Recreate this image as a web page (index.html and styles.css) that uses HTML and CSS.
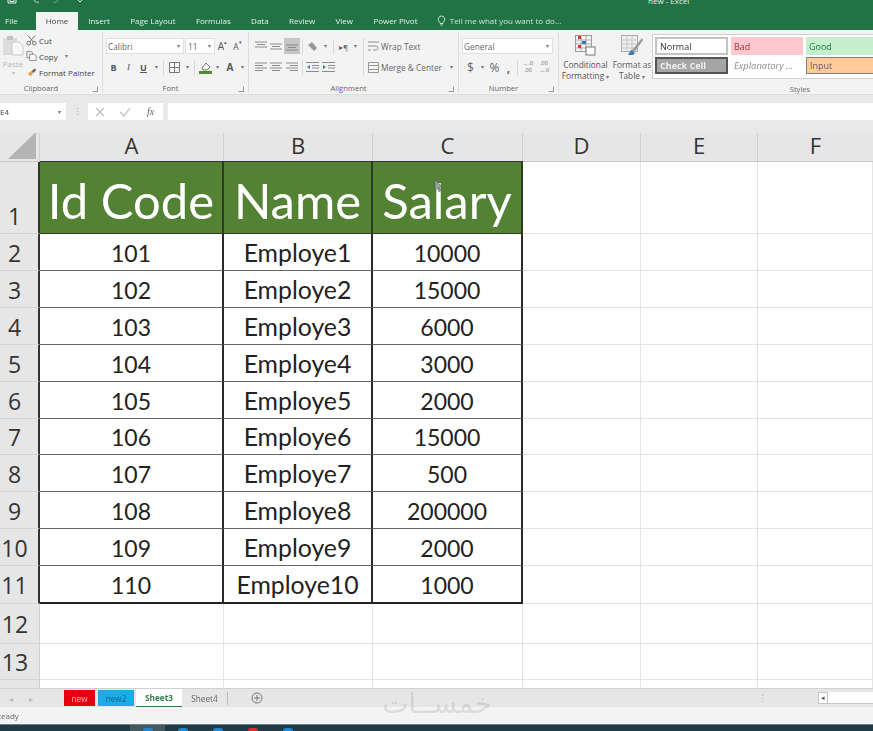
FILE: index.html
```html
<!DOCTYPE html>
<html lang="en">
<head>
<meta charset="utf-8">
<title>new - Excel</title>
<link rel="stylesheet" href="styles.css">
</head>
<body>
<div class="app">
  <header class="titlebar">
    <svg class="qat" width="90" height="5" viewBox="0 0 90 5"><path d="M8 0v3h8V0M10 0v1.5h4V0" fill="none" stroke="#e8f0ea" stroke-width="1"/><path d="M34 0c1 2 3 3 5 2" fill="none" stroke="#cfe0d5"/><path d="M58 0c-1 2-3 3-5 2" fill="none" stroke="#7fa98d"/><path d="M78 0l2 2 2-2" fill="none" stroke="#e8f0ea"/></svg>
    <span class="doc-title">new - Excel</span>
  </header>
  <nav class="tabs">
    <span class="tab tab-file">File</span>
    <span class="tab tab-home">Home</span>
    <span class="tab">Insert</span>
    <span class="tab">Page Layout</span>
    <span class="tab">Formulas</span>
    <span class="tab">Data</span>
    <span class="tab">Review</span>
    <span class="tab">View</span>
    <span class="tab">Power Pivot</span>
    <span class="tell">
      <svg width="9" height="12" viewBox="0 0 9 12"><path d="M4.5 1a3.3 3.3 0 0 0-2 5.9c.5.5.6 1 .6 1.6h2.8c0-.6.1-1.100.6-1.600A3.300 3.300 0 0 0 4.500 1zM3.300 10h2.400" fill="none" stroke="#dcebe1" stroke-width=".9"/></svg>
      Tell me what you want to do...
    </span>
  </nav>

  <section class="ribbon">
    <div class="group g-clip">
      <div class="body clip-body">
        <div class="paste">
          <svg width="23" height="21" viewBox="0 0 23 21"><rect x="1" y="3" width="14" height="17" fill="#dcdcdc"/><rect x="5" y="1" width="6" height="4" fill="#c4c4c4"/><path d="M10 7h7l4 4v9H10z" fill="#f7f7f7" stroke="#c8c8c8"/></svg>
          <span class="paste-label">Paste</span>
          <span class="caret pale">▾</span>
        </div>
        <div class="clip-list">
          <div class="clip-row"><svg width="11" height="12" viewBox="0 0 12 12"><path d="M2 1l6 7M10 1L4 8" stroke="#666" fill="none"/><circle cx="3" cy="9.500" r="2" fill="none" stroke="#666"/><circle cx="9" cy="9.500" r="2" fill="none" stroke="#666"/></svg><span>Cut</span></div>
          <div class="clip-row"><svg width="11" height="12" viewBox="0 0 12 12"><path d="M1 1h5l1 1v6H1z" fill="#eee" stroke="#888"/><path d="M4 4h5l2 2v5H4z" fill="#f8f8f8" stroke="#888"/></svg><span>Copy</span><span class="caret copy-caret">▾</span></div>
          <div class="clip-row"><svg width="11" height="12" viewBox="0 0 12 12"><path d="M6 5l4-3 1 2-3 3z" fill="#666"/><path d="M2 8l4-3 2 2-3 4z" fill="#e9a24a"/></svg><span>Format Painter</span></div>
        </div>
      </div>
      <div class="label"><i></i><span>Clipboard</span><b class="launch"></b></div>
    </div>

    <div class="group g-font">
      <div class="body">
        <div class="row">
          <div class="select font-name"><span>Calibri</span><span class="caret">▾</span></div>
          <div class="select font-size"><span>11</span><span class="caret">▾</span></div>
          <span class="ib big-a">A<sup>▴</sup></span>
          <span class="ib small-a">A<sup>▾</sup></span>
        </div>
        <div class="row row2">
          <span class="ib fmt fmt-b">B</span>
          <span class="ib fmt fmt-i">I</span>
          <span class="ib fmt fmt-u">U</span>
          <span class="caret cw">▾</span>
          <i class="sep"></i>
          <span class="ib wide"><svg width="11" height="11" viewBox="0 0 11 11"><path d="M.5.5h10v10H.5zM5.500.5v10M.5 5.500h10" fill="none" stroke="#777"/></svg></span>
          <span class="caret cw">▾</span>
          <i class="sep"></i>
          <span class="ib wide"><svg width="13" height="13" viewBox="0 0 13 13"><path d="M3 7l4-5 4 4-3 3H4z" fill="#f4f4f4" stroke="#777"/><rect x="0" y="10" width="13" height="3" fill="#4c8c2f"/></svg></span>
          <span class="caret cw cw-tight">▾</span>
          <span class="ib wide color-a">A</span>
          <span class="caret cw cw-tight">▾</span>
        </div>
      </div>
      <div class="label"><i></i><span>Font</span><b class="launch"></b></div>
    </div>

    <div class="group g-align">
      <div class="body align-body">
        <div class="align-left">
          <div class="row row-align">
            <span class="ib al"><svg width="12" height="10" viewBox="0 0 12 10"><path d="M0 1h12M2 3.500h8M0 6h12" stroke="#8a8a8a"/></svg></span>
            <span class="ib al"><svg width="12" height="10" viewBox="0 0 12 10"><path d="M0 3h12M2 5.500h8M0 8h12" stroke="#8a8a8a"/></svg></span>
            <span class="ib al al-on"><svg width="12" height="10" viewBox="0 0 12 10"><path d="M0 4h12M2 6.500h8M0 9h12" stroke="#8a8a8a"/></svg></span>
            <i class="sep"></i>
            <span class="ib wide"><svg width="12" height="11" viewBox="0 0 12 11"><path d="M1 4l4-3 5 6-3 3z" fill="#999"/></svg></span>
            <span class="caret cw cw-tight">▾</span>
            <i class="sep sep-loose"></i>
            <span class="ib rtl-ic">▸¶</span>
            <span class="caret cw cw-tight">▾</span>
          </div>
          <div class="row row2 row-align">
            <span class="ib al"><svg width="12" height="10" viewBox="0 0 12 10"><path d="M0 1h12M0 3.500h8M0 6h12M0 8.500h8" stroke="#8a8a8a"/></svg></span>
            <span class="ib al"><svg width="12" height="10" viewBox="0 0 12 10"><path d="M0 1h12M2 3.500h8M0 6h12M2 8.500h8" stroke="#8a8a8a"/></svg></span>
            <span class="ib al"><svg width="12" height="10" viewBox="0 0 12 10"><path d="M0 1h12M4 3.500h8M0 6h12M4 8.500h8" stroke="#8a8a8a"/></svg></span>
            <i class="sep"></i>
            <span class="ib al wide-al"><svg width="13" height="10" viewBox="0 0 13 10"><path d="M0 .5h13M6 3.500h7M6 6h7M0 9.500h13" stroke="#8a8a8a"/><path d="M4 3v4L1 5z" fill="#3a78b0"/></svg></span>
            <span class="ib al wide-al"><svg width="13" height="10" viewBox="0 0 13 10"><path d="M0 .5h13M6 3.500h7M6 6h7M0 9.500h13" stroke="#8a8a8a"/><path d="M1 3v4l3-2z" fill="#3a9060"/></svg></span>
          </div>
        </div>
        <i class="sep tall"></i>
        <div class="align-right">
          <div class="cmd"><svg width="11" height="11" viewBox="0 0 11 11"><path d="M0 1h11M0 5h7c4 0 4 4 0 4H5M0 9h3" fill="none" stroke="#8a8a8a"/></svg><span>Wrap Text</span></div>
          <div class="cmd cmd2"><svg width="11" height="11" viewBox="0 0 11 11"><path d="M.5.5h10v10H.5zM.5 3.500h10M.5 7.500h10" fill="none" stroke="#999"/></svg><span>Merge &amp; Center</span><span class="caret merge-caret">▾</span></div>
        </div>
      </div>
      <div class="label"><i></i><span>Alignment</span><b class="launch"></b></div>
    </div>

    <div class="group g-num">
      <div class="body">
        <div class="row"><div class="select num-select"><span>General</span><span class="caret">▾</span></div></div>
        <div class="row row2 num-row">
          <span class="ib num-sym dollar">$</span>
          <span class="caret cw">▾</span>
          <span class="ib num-sym pct">%</span>
          <span class="ib num-sym comma">,</span>
          <i class="sep"></i>
          <span class="dec">←.0<br>.00</span>
          <span class="dec">.00<br>→.0</span>
        </div>
      </div>
      <div class="label"><i></i><span>Number</span><b class="launch"></b></div>
    </div>

    <div class="big-btn cond">
      <svg width="21" height="21" viewBox="0 0 21 21"><rect x=".5" y=".5" width="16" height="16" fill="#f7f7f7" stroke="#999"/><path d="M.5 5h16M.5 9h16M.5 13h16M6 .5v16M11 .5v16" stroke="#aaa"/><rect x="3" y="1" width="3" height="3" fill="#d33"/><rect x="7" y="6" width="4" height="3" fill="#3a78b0"/><rect x="3" y="10" width="3" height="3" fill="#d33"/><rect x="11" y="12" width="9" height="8" fill="#fff" stroke="#777"/></svg>
      <span>Conditional</span>
      <span>Formatting <em class="caret">▾</em></span>
    </div>
    <div class="big-btn table-btn">
      <svg width="23" height="21" viewBox="0 0 23 21"><rect x=".5" y=".5" width="16" height="16" fill="#f0f0f0" stroke="#aaa"/><path d="M.5 5h16M.5 9h16M.5 13h16M6 .5v16M11 .5v16" stroke="#c4c4c4"/><path d="M21 3L12 14l-2 2 2 1 3-2 7-10z" fill="#9a9a9a"/><path d="M7 20l3-5 4 3-2 2z" fill="#3a78b0"/></svg>
      <span>Format as</span>
      <span>Table <em class="caret">▾</em></span>
    </div>

    <div class="group g-styles">
      <div class="gallery">
        <span class="st st-normal">Normal</span>
        <span class="st st-bad">Bad</span>
        <span class="st st-good">Good</span>
        <span class="st st-check">Check Cell</span>
        <span class="st st-expl">Explanatory ...</span>
        <span class="st st-input">Input</span>
      </div>
      <div class="label styles-label"><span>Styles</span></div>
    </div>
  </section>

  <section class="formula">
    <div class="namebox"><span>E4</span><span class="caret">▾</span></div>
    <span class="dots">⋮</span>
    <div class="fx-buttons">
      <svg width="10" height="10" viewBox="0 0 10 10"><path d="M1 1l8 8M9 1L1 9" stroke="#bdbdbd" stroke-width="1.200"/></svg>
      <svg width="12" height="10" viewBox="0 0 12 10"><path d="M1 5l4 4 6-8" stroke="#bdbdbd" stroke-width="1.200" fill="none"/></svg>
      <span class="fx">fx</span>
    </div>
    <div class="fx-input"></div>
  </section>

  <main class="sheet">
    <div class="corner"><svg width="28" height="27" viewBox="0 0 28 27"><path d="M28 0v27H0z" fill="#b4b4b4"/></svg></div>
    <div class="colh">A</div><div class="colh">B</div><div class="colh">C</div><div class="colh">D</div><div class="colh">E</div><div class="colh colh-last">F</div>

    <div class="rowh rowh-first r-head">1</div>
    <div class="th">Id Code</div><div class="th">Name</div><div class="th">Salary</div><div class="c"></div><div class="c"></div><div class="c"></div>

    <div class="rowh r-data">2</div><div class="td">101</div><div class="td td-name">Employe1</div><div class="td">10000</div><div class="c"></div><div class="c"></div><div class="c"></div>
    <div class="rowh r-data">3</div><div class="td">102</div><div class="td td-name">Employe2</div><div class="td">15000</div><div class="c"></div><div class="c"></div><div class="c"></div>
    <div class="rowh r-data">4</div><div class="td">103</div><div class="td td-name">Employe3</div><div class="td">6000</div><div class="c"></div><div class="c"></div><div class="c"></div>
    <div class="rowh r-data">5</div><div class="td">104</div><div class="td td-name">Employe4</div><div class="td">3000</div><div class="c"></div><div class="c"></div><div class="c"></div>
    <div class="rowh r-data">6</div><div class="td">105</div><div class="td td-name">Employe5</div><div class="td">2000</div><div class="c"></div><div class="c"></div><div class="c"></div>
    <div class="rowh r-data">7</div><div class="td">106</div><div class="td td-name">Employe6</div><div class="td">15000</div><div class="c"></div><div class="c"></div><div class="c"></div>
    <div class="rowh r-data">8</div><div class="td">107</div><div class="td td-name">Employe7</div><div class="td">500</div><div class="c"></div><div class="c"></div><div class="c"></div>
    <div class="rowh r-data">9</div><div class="td">108</div><div class="td td-name">Employe8</div><div class="td">200000</div><div class="c"></div><div class="c"></div><div class="c"></div>
    <div class="rowh r-data">10</div><div class="td">109</div><div class="td td-name">Employe9</div><div class="td">2000</div><div class="c"></div><div class="c"></div><div class="c"></div>
    <div class="rowh r-data">11</div><div class="td td-last">110</div><div class="td td-name td-last">Employe10</div><div class="td td-last">1000</div><div class="c"></div><div class="c"></div><div class="c"></div>
    <div class="rowh">12</div><div class="c"></div><div class="c"></div><div class="c"></div><div class="c"></div><div class="c"></div><div class="c"></div>
    <div class="rowh">13</div><div class="c"></div><div class="c"></div><div class="c"></div><div class="c"></div><div class="c"></div><div class="c"></div>
    <div class="rowh rowh-end"></div><div class="c"></div><div class="c"></div><div class="c"></div><div class="c"></div><div class="c"></div><div class="c"></div>

    <svg class="cursor" width="10" height="14" viewBox="0 0 10 14"><path d="M1 1v10l2.500-2 1.500 3.500 1.800-.8L5.300 8.300H8.500z" fill="#9aa5a0" stroke="#55625a" stroke-width=".7"/></svg>
  </main>

  <section class="sheetbar">
    <span class="nav">◂</span>
    <span class="nav">▸</span>
    <span class="stab stab-red">new</span>
    <span class="stab stab-blue">new2</span>
    <span class="stab stab-active">Sheet3</span>
    <span class="stab stab-plain">Sheet4</span>
    <i class="stab-sep"></i>
    <svg class="plus" width="12" height="12" viewBox="0 0 12 12"><circle cx="6" cy="6" r="5" fill="none" stroke="#777"/><path d="M3 6h6M6 3v6" stroke="#777"/></svg>
    <span class="dots sheet-dots">⋮</span>
    <div class="scroll"><span class="scroll-btn">◂</span><span class="scroll-track"></span></div>
    <span class="watermark" lang="ar" dir="rtl">خمســات</span>
  </section>
  <footer class="status">Ready</footer>
  <div class="taskbar">
    <span class="task task-on"><b class="blue"></b></span>
    <span class="task"><b class="blue"></b></span>
    <span class="task"><b class="blue"></b></span>
    <span class="task"><b class="red"></b></span>
    <span class="task"><b class="blue"></b></span>
  </div>
</div>
</body>
</html>
```

FILE: styles.css
```css
* { box-sizing: border-box; }
html, body { margin: 0; padding: 0; background: #fff; }
.app {
  width: 873px; height: 731px; overflow: hidden; position: relative;
  display: flex; flex-direction: column;
  font-family: "Open Sans", "Liberation Sans", sans-serif;
  color: #444;
}
i, em { font-style: normal; }

.titlebar { height: 12px; background: #217346; flex: none; display: flex; overflow: hidden; }
.qat { flex: none; display: block; }
.doc-title { margin-left: 558px; margin-top: -5px; font-size: 8px; line-height: 12px; color: #e4efe8; }

.tabs { height: 18px; flex: none; background: #217346; display: flex; align-items: stretch; font-size: 8px; color: #e6f0ea; line-height: 18px; filter: blur(.25px); }
.tab { padding: 0 10.200px; white-space: nowrap; }
.tab-file { width: 36px; padding: 0 0 0 5px; }
.tab-home { width: 42px; padding: 0; text-align: center; background: #f3f3f3; color: #444; }
.tell { margin-left: 9px; display: flex; align-items: center; gap: 4px; white-space: nowrap; color: #cfe2d6; }

.ribbon { height: 65px; flex: none; display: flex; background: #f3f3f3; padding-top: 2px; font-size: 8px; border-bottom: 1px solid #dedede; filter: blur(.3px); }
.group { display: flex; flex-direction: column; border-right: 1px solid #dcdcdc; flex: none; height: 61px; }
.body { height: 51px; padding-top: 6px; flex: none; }
.label { height: 11px; padding-right: 10px; display: grid; grid-template-columns: 1fr auto 1fr; align-items: center; color: #666; line-height: 11px; font-size: 7.600px; }
.launch { justify-self: end; margin-right: -6px; width: 6px; height: 6px; border: 1px solid #999; border-top-color: transparent; border-left-color: transparent; }
.g-clip .label { padding-right: 20px; }
.g-clip .launch { margin-right: -16px; }
.caret { font-size: 6px; color: #777; }
.pale { color: #bbb; }
.row { display: flex; align-items: center; height: 16px; }
.row2 { margin-top: 5px; }
.ib { display: flex; align-items: center; justify-content: center; width: 15px; height: 16px; flex: none; }
.wide { width: 16px; }
.cw { width: 10px; text-align: center; flex: none; }
.cw-tight { width: 9px; }
.sep { width: 1px; height: 15px; background: #d8d8d8; flex: none; margin: 0 2px; }
.sep-loose { margin: 0 3px; }

.g-clip { width: 103px; }
.clip-body { display: flex; padding-top: 0; }
.paste { width: 26px; display: flex; flex-direction: column; align-items: center; padding-top: 3px; flex: none; }
.paste-label { color: #b5b5b5; line-height: 10px; margin-top: 3px; }
.clip-list { display: flex; flex-direction: column; }
.clip-row { height: 16px; display: flex; align-items: center; gap: 1px; white-space: nowrap; }
.clip-row svg { margin-right: 1px; }
.copy-caret { margin-left: 6px; }

.g-font { width: 146px; }
.g-font .body { padding-left: 3px; }
.select { background: #fff; border: 1px solid #e0e0e0; height: 16px; display: flex; align-items: center; justify-content: space-between; padding: 0 3px 0 1px; flex: none; color: #666; font-size: 8.300px; }
.font-name { width: 78px; }
.font-size { width: 30px; margin-left: 1px; padding-left: 2px; }
.big-a { font-size: 10px; color: #555; }
.small-a { font-size: 8.500px; color: #555; }
.ib sup { font-size: 5px; line-height: 1; align-self: flex-start; margin-top: 2px; }
.fmt { font-family: "Liberation Serif", serif; font-size: 9px; color: #555; }
.fmt-b { font-family: "Open Sans", sans-serif; font-weight: 700; }
.fmt-i { font-style: italic; }
.fmt-u { text-decoration: underline; font-family: "Open Sans", sans-serif; font-weight: 700; }
.color-a { font-weight: 700; font-size: 10px; color: #555; }

.g-align { width: 210px; }
.align-body { display: flex; padding-left: 4px; }
.align-left { width: 110px; flex: none; }
.row-align .al { width: 15.500px; }
.al-on { background: #c6c6c6; }
.wide-al { width: 16px !important; }
.rtl-ic { font-size: 8px; color: #666; width: 14px; }
.tall { height: 38px; margin: 0 4px 0 0; }
.cmd { height: 16px; display: flex; align-items: center; gap: 2px; white-space: nowrap; font-size: 8.300px; color: #666; }
.cmd2 { margin-top: 5px; }
.merge-caret { margin-left: 6px; }

.g-num { width: 100px; }
.g-num .body { padding-left: 3px; }
.num-select { width: 91px; }
.num-row { padding-left: 2px; color: #666; }
.num-sym { font-size: 12px; width: 13px; }
.pct { width: 15px; }
.comma { font-weight: 700; }
.dec { width: 16px; font-size: 5.500px; line-height: 7.500px; text-align: center; flex: none; }

.big-btn { width: 47px; flex: none; display: flex; flex-direction: column; align-items: center; height: 48px; line-height: 11px; color: #555; white-space: nowrap; font-size: 8.300px; }
.big-btn svg { margin-top: 3px; margin-bottom: 3px; flex: none; }
.cond { width: 53px; }
.table-btn { width: 40px; }

.g-styles { width: 296px; border-right: 0; }
.gallery { height: 45px; margin-top: 2px; background: #fff; border: 1px solid #cfcfcf; padding: 2px; display: grid; grid-template-columns: 73px 72px 72px; grid-template-rows: 18px 17px; column-gap: 3px; row-gap: 2px; flex: none; }
.st { display: flex; align-items: center; padding-left: 3px; font-size: 9px; white-space: nowrap; overflow: hidden; }
.st-normal { border: 2px solid #c4c4c4; color: #333; }
.st-bad { background: #ffc7ce; color: #a8323c; }
.st-good { background: #c6efce; color: #1f7a3a; }
.st-check { background: #a5a5a5; border: 2px solid #555; color: #f0f0f0; font-weight: 700; }
.st-expl { color: #8a8a8a; font-style: italic; font-size: 9.400px; }
.st-input { background: #fc9; color: #6a5a76; border: 1px solid #7f7f7f; }
.styles-label { margin-top: 5px; padding-right: 0; grid-template-columns: 1fr; justify-items: center; }

.formula { flex: none; height: 38px; background: #e9e9e9; display: flex; align-items: flex-start; padding-top: 8px; }
.namebox { width: 66px; height: 17px; background: #fff; display: flex; align-items: center; justify-content: space-between; padding: 0 5px 0 0; font-size: 8px; color: #444; flex: none; filter: blur(.25px); }
.dots { font-size: 9px; color: #aaa; line-height: 17px; }
.formula .dots { width: 22px; text-align: center; flex: none; }
.fx-buttons { width: 75px; height: 17px; background: #fff; flex: none; display: flex; align-items: center; gap: 14px; padding-left: 7px; filter: blur(.25px); }
.fx { font-family: "Liberation Serif", serif; font-style: italic; font-size: 10px; color: #666; margin-left: 2px; }
.fx-input { flex: 1; height: 17px; margin-left: 5px; background: #fff; }

.sheet { flex: none; height: 555px; position: relative; display: grid; grid-template-columns: 40px 184px 149px 150px 118px 117px 115px; grid-template-rows: 29px 72px 37px 37px 37px 37px 37px 36px 37px 37px 37px 38px 40px 36px 9px; background: #fff; overflow: hidden; }
.corner { background: #e6e6e6; border-right: 1px solid #d0d0d0; border-bottom: 1px solid #c8c8c8; padding: 0 0 2px 8px; display: flex; align-items: flex-end; }
.colh { background: #e6e6e6; border-right: 1px solid #d0d0d0; border-bottom: 1px solid #c8c8c8; display: flex; align-items: center; justify-content: center; font-size: 22px; color: #333; line-height: 1; padding-bottom: 4px; }
.colh-last { border-right: 0; }
.rowh { background: #e6e6e6; border-right: 1px solid #cfcfcf; border-bottom: 1px solid #d4d4d4; display: flex; align-items: center; justify-content: center; font-size: 23px; color: #333; line-height: 1; padding: 2px 9px 0 0; }
.rowh-first { align-items: flex-end; padding-bottom: 5px; }
.r-head, .r-data { border-right: 2px solid #333; }
.rowh-end { border-bottom: 0; }
.c { border-right: 1px solid #e4e4e4; border-bottom: 1px solid #e4e4e4; }
.th { background: #548235; color: #fff; display: flex; align-items: center; justify-content: center; font-family: Lato, "Liberation Sans", sans-serif; font-size: 49px; line-height: 1; padding-top: 5px; border-right: 2px solid #2c3c22; border-bottom: 1px solid #2c3c22; box-shadow: 0 -1px 0 #333; white-space: nowrap; }
.td { display: flex; align-items: center; justify-content: center; font-family: Lato, "Liberation Sans", sans-serif; font-size: 23px; color: #222; border-right: 2px solid #2a2a2a; border-bottom: 1px solid #666; line-height: 1; padding-top: 2px; }
.td-name { font-size: 24.800px; }
.td-last { border-bottom: 2px solid #222; }
.cursor { position: absolute; left: 434px; top: 46px; }

.sheetbar { height: 19px; flex: none; background: #e6e6e6; border-top: 1px solid #d0d0d0; display: flex; align-items: center; position: relative; font-size: 8.200px; color: #666; }
.nav { width: 20px; text-align: center; color: #bbb; font-size: 8px; flex: none; margin-left: 1px; }
.nav + .nav { margin-left: 0; }
.stab { height: 16px; display: flex; align-items: center; justify-content: center; flex: none; filter: blur(.25px); }
.stab-red { width: 31px; margin-left: 23px; background: #e6000f; color: #f5b8bc; }
.stab-blue { width: 36px; margin-left: 3px; background: #18ade6; color: #1d5f84; }
.stab-active { width: 46px; margin-left: 2px; height: 18px; background: #fff; color: #2e7d4a; font-weight: 700; border-bottom: 1px solid #2e7d4a; }
.stab-plain { width: 45px; }
.stab-sep { width: 1px; height: 13px; background: #bbb; flex: none; }
.plus { margin-left: 23px; flex: none; }
.sheet-dots { margin-left: 495px; width: 8px; flex: none; }
.scroll { margin-left: 52px; flex: 1; display: flex; height: 12px; }
.scroll-btn { width: 10px; background: #fff; border: 1px solid #c4c4c4; font-size: 7px; line-height: 10px; text-align: center; color: #555; flex: none; }
.scroll-track { flex: 1; background: #fff; border-bottom: 1px solid #c4c4c4; }
.watermark { position: absolute; left: 382px; top: -3px; z-index: 2; font-family: "DejaVu Sans", sans-serif; font-size: 28px; line-height: 36px; color: rgba(0,0,0,.1); white-space: nowrap; }

.status { height: 17px; flex: none; background: #f3f3f3; font-size: 8px; line-height: 17px; padding-left: 0; text-indent: -4px; color: #666; overflow: hidden; filter: blur(.25px); }
.taskbar { height: 7px; flex: none; background: #203a46; display: flex; padding-left: 130px; overflow: hidden; border-top: 1px solid #6d7f87; }
.task { width: 35px; display: flex; justify-content: center; align-items: flex-end; flex: none; }
.task b { width: 10px; height: 3px; border-radius: 5px 5px 0 0; }
.task-on { background: #46585f; }
.blue { background: #1e88d8; }
.red { background: #d8302a; }
```
